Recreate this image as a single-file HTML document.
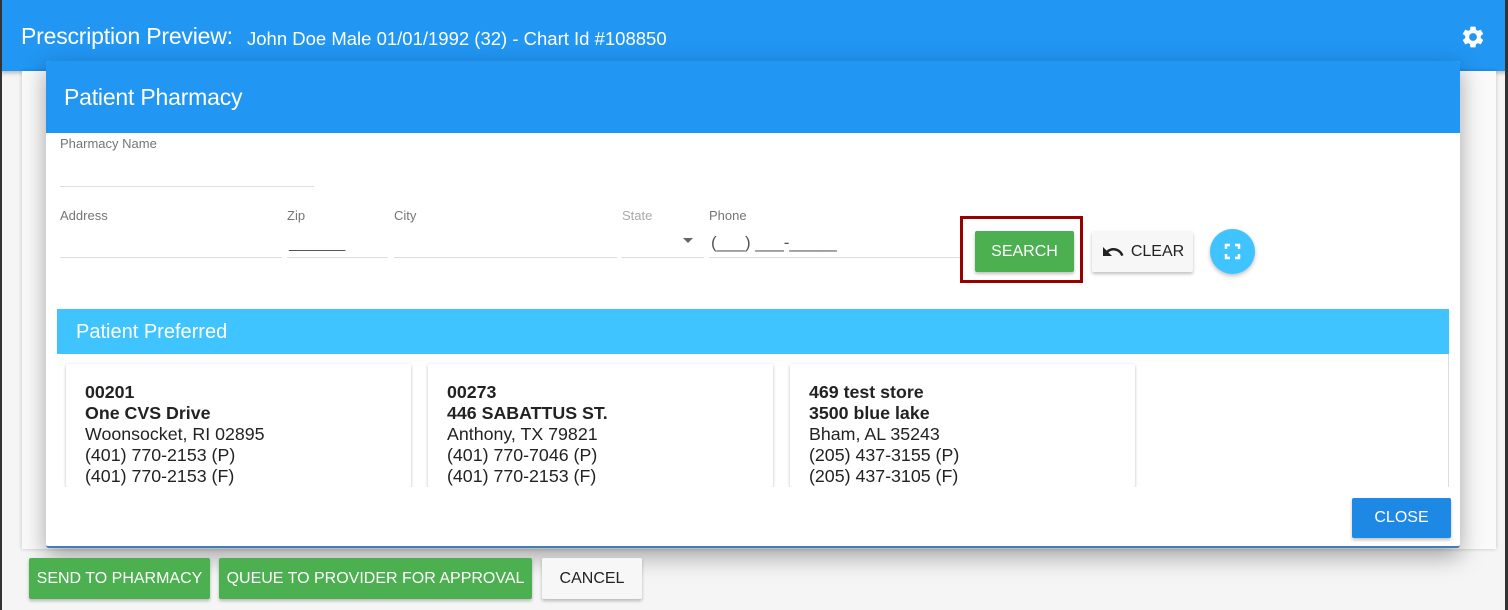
<!DOCTYPE html>
<html><head><style>
*{box-sizing:border-box;margin:0;padding:0}
body{width:1508px;height:610px;overflow:hidden;background:#f5f5f5;font-family:"Liberation Sans",sans-serif;position:relative}
.abs{position:absolute}
.top{left:0;top:0;width:1508px;height:71px;background:#2196f3;box-shadow:0 2px 4px rgba(0,0,0,.25)}
.lbl{font-size:13px;color:#757575}
.line{height:1px;background:#ddd}
.card{background:#fff;box-shadow:0 1px 3px rgba(0,0,0,.25);border-radius:2px;font-size:17.8px;line-height:21px;color:#222;padding:18px 0 0 19px;overflow:hidden;white-space:nowrap}
.btn{font-size:16px;display:flex;align-items:center;justify-content:center;border-radius:2px;box-shadow:0 2px 3px rgba(0,0,0,.25)}
</style></head><body>
<div class="abs" style="left:0;top:0;width:2px;height:610px;background:#333;z-index:9"></div>
<div class="abs" style="right:0;top:0;width:3px;height:610px;background:#333;z-index:9"></div>
<div class="abs top"></div>
<div class="abs" style="left:21px;top:23px;color:#fff;font-size:23px;letter-spacing:-0.2px">Prescription Preview:</div>
<div class="abs" style="left:247px;top:28px;color:#fff;font-size:18.5px">John Doe Male 01/01/1992 (32) - Chart Id #108850</div>
<svg class="abs" style="left:1460px;top:24px" width="26" height="26" viewBox="0 0 24 24"><path fill="#fff" d="M19.14 12.94c.04-.3.06-.61.06-.94 0-.32-.02-.64-.07-.94l2.030-1.58a.49.49 0 0 0 .12-.61l-1.92-3.32a.49.49 0 0 0-.59-.22l-2.39.96c-.5-.38-1.03-.7-1.62-.94l-.36-2.54a.48.48 0 0 0-.48-.41h-3.840c-.24 0-.43.17-.47.41l-.36 2.54c-.59.24-1.13.57-1.62.94l-2.39-.96a.48.48 0 0 0-.59.22L2.740 8.87c-.12.21-.08.47.12.61l2.03 1.58c-.05.3-.09.63-.09.94s.02.64.07.94l-2.03 1.58a.49.49 0 0 0-.12.61l1.92 3.32c.12.22.37.29.59.22l2.39-.96c.5.38 1.03.7 1.62.94l.36 2.54c.05.24.24.41.48.41h3.84c.24 0 .44-.17.47-.41l.36-2.54c.59-.24 1.13-.56 1.62-.94l2.39.96c.22.08.47 0 .59-.22l1.92-3.32c.12-.22.07-.47-.12-.61l-2.01-1.58zM12 15.6A3.6 3.6 0 1 1 12 8.4a3.6 3.6 0 0 1 0 7.2z"/></svg>
<div class="abs" style="left:22px;top:71px;width:1474px;height:478px;background:#fafafa;box-shadow:0 0 4px rgba(0,0,0,.2)"></div>
<div class="abs" style="left:46px;top:61px;width:1414px;height:487px;background:#fff;border-bottom:2px solid #3f7fb8;box-shadow:0 8px 24px rgba(0,0,0,.35);border-radius:3px;overflow:hidden">
 <div style="height:72px;background:#2196f3;color:#fff;font-size:23px;padding:23px 0 0 18px;letter-spacing:-0.2px">Patient Pharmacy</div>
</div>
<div class="abs lbl" style="left:60px;top:136px">Pharmacy Name</div>
<div class="abs line" style="left:60px;top:186px;width:254px"></div>
<div class="abs lbl" style="left:60px;top:208px">Address</div>
<div class="abs line" style="left:60px;top:257px;width:222px"></div>
<div class="abs lbl" style="left:287px;top:208px">Zip</div>
<div class="abs" style="left:289px;top:235px;font-size:16px;color:#555;letter-spacing:-1px">_______</div>
<div class="abs line" style="left:287px;top:257px;width:101px"></div>
<div class="abs lbl" style="left:394px;top:208px">City</div>
<div class="abs line" style="left:394px;top:257px;width:223px"></div>
<div class="abs lbl" style="left:622px;top:208px;color:#aaa">State</div>
<div class="abs" style="left:683px;top:238px;width:0;height:0;border-left:5px solid transparent;border-right:5px solid transparent;border-top:5px solid #666"></div>
<div class="abs line" style="left:621px;top:257px;width:83px"></div>
<div class="abs lbl" style="left:709px;top:208px">Phone</div>
<div class="abs" style="left:711px;top:233px;font-size:17px;color:#555">(___) ___-_____</div>
<div class="abs line" style="left:709px;top:257px;width:252px"></div>
<div class="abs" style="left:960px;top:216px;width:123px;height:67px;border:3px solid #990000"></div>
<div class="abs btn" style="left:975px;top:231px;width:99px;height:41px;background:#4caf50;color:#fff">SEARCH</div>
<div class="abs btn" style="left:1092px;top:231px;width:101px;height:41px;background:#f7f7f7;color:#222"><svg width="24" height="24" viewBox="0 0 24 24" style="margin-right:6px"><path fill="#222" d="M12.5 8c-2.65 0-5.05.99-6.9 2.6L2 7v9h9l-3.62-3.62c1.39-1.16 3.160-1.88 5.12-1.88 3.54 0 6.55 2.31 7.6 5.5l2.37-.78C21.08 11.03 17.15 8 12.5 8z"/></svg>CLEAR</div>
<div class="abs" style="left:1210px;top:229px;width:45px;height:45px;border-radius:50%;background:#40c4ff;box-shadow:0 2px 4px rgba(0,0,0,.25)"><svg width="45" height="45" viewBox="0 0 45 45"><path d="M16 20v-4h4M25 16h4v4M29 25v4h-4M20 29h-4v-4" stroke="#fff" stroke-width="2.5" fill="none"/></svg></div>
<div class="abs" style="left:57px;top:309px;width:1392px;height:178px;background:#fff;border-right:1px solid #ddd"></div>
<div class="abs" style="left:57px;top:309px;width:1392px;height:45px;background:#40c4ff;color:#fff;font-size:20px;padding:12px 0 0 19px">Patient Preferred</div>
<div class="abs card" style="left:66px;top:364px;width:345px;height:123px"><b>00201</b><br><b>One CVS Drive</b><br>Woonsocket, RI 02895<br>(401) 770-2153 (P)<br>(401) 770-2153 (F)</div>
<div class="abs card" style="left:428px;top:364px;width:345px;height:123px"><b>00273</b><br><b>446 SABATTUS ST.</b><br>Anthony, TX 79821<br>(401) 770-7046 (P)<br>(401) 770-2153 (F)</div>
<div class="abs card" style="left:790px;top:364px;width:345px;height:123px"><b>469 test store</b><br><b>3500 blue lake</b><br>Bham, AL 35243<br>(205) 437-3155 (P)<br>(205) 437-3105 (F)</div>
<div class="abs" style="left:57px;top:487px;width:1392px;height:58px;background:#fff"></div>
<div class="abs btn" style="left:1352px;top:498px;width:99px;height:40px;background:#1e88e5;color:#fff">CLOSE</div>
<div class="abs btn" style="left:29px;top:558px;width:181px;height:41px;background:#4caf50;color:#fff">SEND TO PHARMACY</div>
<div class="abs btn" style="left:219px;top:558px;width:313px;height:41px;background:#4caf50;color:#fff">QUEUE TO PROVIDER FOR APPROVAL</div>
<div class="abs btn" style="left:542px;top:558px;width:100px;height:41px;background:#f7f7f7;color:#222">CANCEL</div>
</body></html>
